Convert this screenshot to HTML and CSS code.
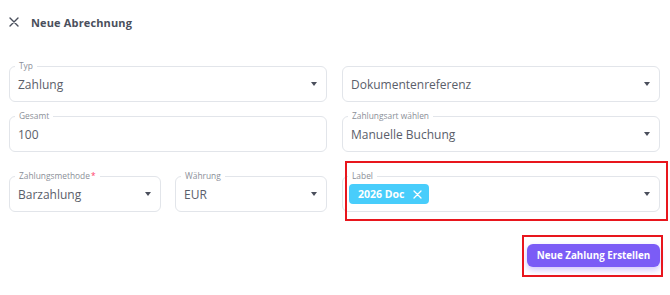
FILE: index.html
```html
<!DOCTYPE html>
<html lang="de">
<head>
<meta charset="utf-8">
<link rel="stylesheet" href="styles.css">
</head>
<body>
<div class="dialog">
  <header class="head">
    <svg class="close" width="10" height="10" viewBox="0 0 10 10"><path d="M1 1L9 9M9 1L1 9" stroke="#4a4f5c" stroke-width="1.4" stroke-linecap="round"/></svg>
    <h1 class="title">Neue Abrechnung</h1>
  </header>
  <div class="form">
    <div class="col">
      <div class="field"><span class="lbl">Typ</span><span class="val">Zahlung</span><span class="caret"></span></div>
      <div class="field"><span class="lbl">Gesamt</span><span class="val">100</span></div>
      <div class="pair">
        <div class="field"><span class="lbl">Zahlungsmethode<i class="req">*</i></span><span class="val">Barzahlung</span><span class="caret"></span></div>
        <div class="field"><span class="lbl">Währung</span><span class="val">EUR</span><span class="caret"></span></div>
      </div>
    </div>
    <div class="col">
      <div class="field"><span class="val">Dokumentenreferenz</span><span class="caret"></span></div>
      <div class="field"><span class="lbl">Zahlungsart wählen</span><span class="val">Manuelle Buchung</span><span class="caret"></span></div>
      <div class="field labelfield"><span class="lbl">Label</span>
        <span class="chip">2026 Doc
          <svg width="9" height="9" viewBox="0 0 9 9"><path d="M1 1L8 8M8 1L1 8" stroke="#fff" stroke-width="1.3" stroke-linecap="round"/></svg>
        </span>
        <span class="caret"></span>
        <div class="hl hl-label"></div>
      </div>
    </div>
  </div>
  <div class="actions">
    <button class="btn">Neue Zahlung Erstellen</button>
    <div class="hl hl-btn"></div>
  </div>
</div>
</body>
</html>
```

FILE: styles.css
```css
html, body { margin: 0; padding: 0; background: #fff; }
body { font-family: "Open Sans", "Liberation Sans", sans-serif; color: #4d5260; width: 670px; height: 295px; overflow: hidden; }
.dialog { padding: 0 10px 0 9px; }
.head { display: flex; align-items: center; height: 44px; }
.close { margin-left: 0; margin-right: 12px; }
.title { margin: 0; font-size: 11px; font-weight: 700; color: #4a4f5c; letter-spacing: 0.15px; }
.form { display: grid; grid-template-columns: 318px 318px; column-gap: 15px; margin-top: 22px; }
.col { display: flex; flex-direction: column; gap: 14px; }
.col > :last-child { margin-top: 10px; }
.pair { display: grid; grid-template-columns: 152px 152px; column-gap: 14px; }
.field { position: relative; height: 36px; box-sizing: border-box; border: 1px solid #e2e5ea; border-radius: 6px; display: flex; align-items: center; padding: 0 9px 0 8px; }
.lbl { position: absolute; left: 5px; top: -7px; font-size: 8.4px; line-height: 12px; color: #8b8f98; background: #fff; padding: 0 4px; }
.req { font-style: normal; color: #ff3b6b; margin-left: 1px; }
.val { flex: 1; font-size: 12px; color: #5a5e6a; }
.caret { width: 0; height: 0; border-left: 3.5px solid transparent; border-right: 3.5px solid transparent; border-top: 4px solid #4a4f5c; margin-left: auto; }
.labelfield { padding-left: 6px; }
.chip { display: inline-flex; align-items: center; gap: 9px; height: 20px; padding: 0 7px 0 9px; background: #48cdfb; color: #fff; font-size: 10.5px; font-weight: 700; border-radius: 4px; }
.hl { position: absolute; border: 2px solid #e8161d; box-sizing: border-box; pointer-events: none; }
.hl-label { left: 2px; top: -16px; width: 323px; height: 60px; }
.actions { position: relative; display: flex; justify-content: flex-end; margin-top: 32px; }
.btn { height: 23px; width: 133px; border: 0; border-radius: 6px; background: #7b5cf6; color: #fff; font-family: inherit; font-size: 9.8px; font-weight: 700; box-shadow: 0 3px 6px rgba(123, 92, 246, 0.35); padding: 0; }
.hl-btn { right: -3px; top: -9px; width: 141px; height: 42px; }
```
